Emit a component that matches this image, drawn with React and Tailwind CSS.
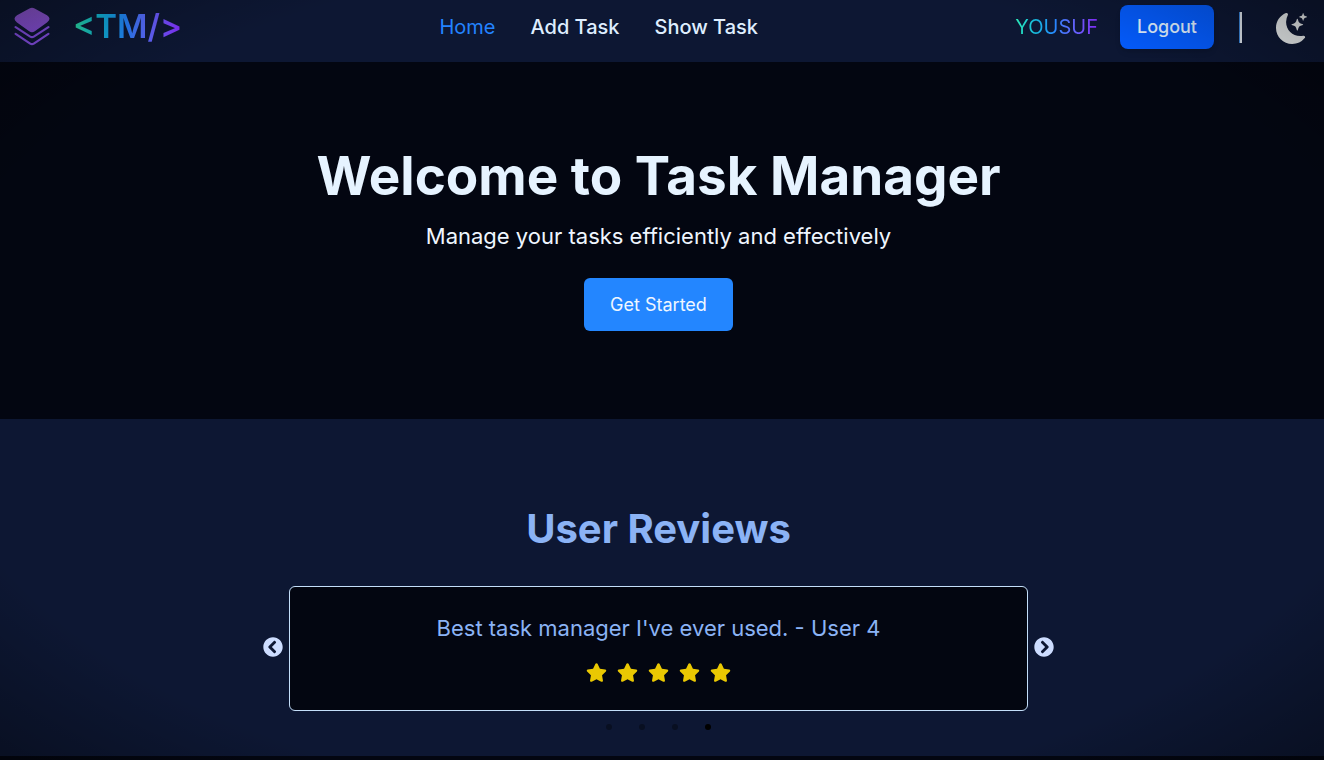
import { BsMoonStarsFill } from "react-icons/bs";
import { FaStar, FaChevronCircleLeft, FaChevronCircleRight } from "react-icons/fa";

function LayersLogo() {
  return (
    <svg viewBox="0 0 36 40" className="h-10 w-9" aria-hidden="true">
      <defs>
        <linearGradient id="layers" x1="0" y1="0" x2="0" y2="1">
          <stop offset="0" stopColor="#8a54cc" />
          <stop offset="1" stopColor="#8850dc" />
        </linearGradient>
      </defs>
      <path
        d="M15.4 2.4 Q18 1 20.6 2.4 L33 9.2 Q38 12.6 33 16.4 L20.8 25.2 Q18 27.4 15.2 25.2 L3 16.4 Q-2 12.6 3 9.2 Z"
        fill="url(#layers)"
      />
      <path
        d="M1.6 21.2 L16.2 30.6 Q18 31.6 19.8 30.6 L34.4 21.2 M1.6 27.8 L16.2 37.6 Q18 38.8 19.8 37.6 L34.4 27.8"
        fill="none"
        stroke="#8750e8"
        strokeWidth="2.2"
        strokeLinecap="round"
      />
    </svg>
  );
}

function Header() {
  return (
    <header className="flex h-[62px] items-start justify-between bg-[#0d1733] pr-[17px] pl-3.5">
      <a href="#home" aria-label="Task Manager" className="flex items-center gap-[23px] pt-1.5">
        <LayersLogo />
        <span className="bg-linear-to-r from-[#2ee0a4] via-[#2680ff] to-[#8526ff] bg-clip-text text-[33px] leading-10 font-semibold text-transparent">
          &lt;TM/&gt;
        </span>
      </a>
      <nav className="flex gap-[35px] pt-3 text-xl leading-[30px] font-medium text-[#dfeeff]">
        <a href="#home" className="font-normal text-[#2383ff]">Home</a>
        <a href="#add">Add Task</a>
        <a href="#show">Show Task</a>
      </nav>
      <div className="flex items-center pt-[5px]">
        <span className="mr-[22px] bg-linear-to-r from-[#2eeab4] via-[#2a83ff] to-[#8522ff] bg-clip-text text-xl text-transparent">
          YOUSUF
        </span>
        <button className="h-11 rounded-lg bg-[#045bfc] px-[17px] text-lg font-medium text-[#dfeeff] shadow-md">
          Logout
        </button>
        <span className="mr-[34px] ml-[25px] h-[31px] w-[3px] border-l border-[#3c86d8] bg-[#dfe6ee]" />
        <button aria-label="Toggle theme" className="pt-0.5 text-[#eff3f4]">
          <BsMoonStarsFill className="size-[31px]" />
        </button>
      </div>
    </header>
  );
}

function Hero() {
  return (
    <section className="flex h-[357px] flex-col items-center bg-[#030611] pt-20 pr-[7px] text-center">
      <h1 className="text-[53px] leading-[68px] font-bold text-[#e6f3ff]">Welcome to Task Manager</h1>
      <p className="mt-2.5 text-[22px] leading-8 text-[#eff6ff]">Manage your tasks efficiently and effectively</p>
      <button className="mt-[26px] h-[53px] rounded-md bg-[#2386ff] px-[26px] text-lg text-[#eff6ff]">
        Get Started
      </button>
    </section>
  );
}

function Reviews() {
  return (
    <section className="flex h-[337px] flex-col items-center bg-[#0d1733] pt-[84px] pr-[7px]">
      <h2 className="text-[40px] leading-[52px] font-bold text-[#8bb3f5]">User Reviews</h2>
      <div className="mt-[31px] flex items-center gap-1.5">
        <button aria-label="Previous review" className="pb-1 text-[#cdddff]">
          <FaChevronCircleLeft className="size-5" />
        </button>
        <article className="flex h-[125px] w-[739px] flex-col items-center rounded-md border border-[#c4dffa] bg-[#030611] pt-[25px]">
          <p className="text-[22px] leading-8 text-[#8bb3f5]">Best task manager I've ever used. - User 4</p>
          <div role="img" aria-label="5 of 5 stars" className="mt-[18px] flex gap-2.5 text-[#eac802]">
            {[1, 2, 3, 4, 5].map((star) => (
              <FaStar key={star} className="size-[21px]" />
            ))}
          </div>
        </article>
        <button aria-label="Next review" className="pb-1 text-[#cdddff]">
          <FaChevronCircleRight className="size-5" />
        </button>
      </div>
      <div className="mt-[13px] flex gap-[27px]">
        <button aria-label="Review 1" className="size-1.5 rounded-full bg-black/35" />
        <button aria-label="Review 2" className="size-1.5 rounded-full bg-black/35" />
        <button aria-label="Review 3" className="size-1.5 rounded-full bg-black/35" />
        <button aria-label="Review 4" className="size-1.5 rounded-full bg-black" />
      </div>
    </section>
  );
}

export default function App() {
  return (
    <div className="relative min-h-screen bg-[#030611] font-['Inter',sans-serif]">
      <Header />
      <main>
        <Hero />
        <Reviews />
      </main>
      <div className="pointer-events-none absolute inset-0 bg-[radial-gradient(ellipse_at_center,transparent_78%,rgba(0,0,0,0.36)_102%)]" />
    </div>
  );
}
